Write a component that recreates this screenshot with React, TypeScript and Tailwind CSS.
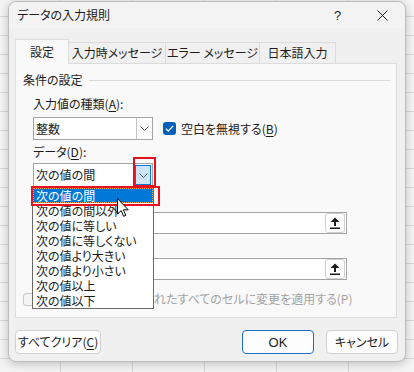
import React from 'react';

const font = "font-['Noto_Sans_CJK_JP','Noto_Sans',sans-serif] [font-feature-settings:'palt']";

const items = [
  '次の値の間',
  '次の値の間以外',
  '次の値に等しい',
  '次の値に等しくない',
  '次の値より大きい',
  '次の値より小さい',
  '次の値以上',
  '次の値以下',
];

function Chevron() {
  return (
    <svg width="9" height="5" viewBox="0 0 9 5" fill="none">
      <path d="M0.5 0.5 L4.5 4.5 L8.5 0.5" stroke="#5f5f5f" strokeWidth="1" />
    </svg>
  );
}

function UploadIcon() {
  return (
    <svg width="10" height="12" viewBox="0 0 10 12">
      <path d="M5 0.5 L9.5 5 L6 5 L6 9 L4 9 L4 5 L0.5 5 Z" fill="#1b1b1b" />
      <rect x="0" y="10.5" width="10" height="1.5" fill="#1b1b1b" />
    </svg>
  );
}

function RefField() {
  return (
    <div className="w-[314px] h-[22px] border border-[#a5a5a5] bg-white flex items-center justify-end pr-px">
      <div className="w-[20px] h-[20px] rounded-[3px] border border-[#cfcfcf] bg-white flex items-center justify-center">
        <UploadIcon />
      </div>
    </div>
  );
}

export default function App() {
  return (
    <div
      className={`${font} relative w-[414px] h-[372px] overflow-hidden pl-2 pt-px text-[12px] leading-none text-[#1b1b1b] bg-[#f4f4f4] [background-image:linear-gradient(to_bottom,#d6d6d6_1px,transparent_1px),linear-gradient(to_right,#d6d6d6_1px,transparent_1px)] [background-size:72px_19px] [background-position:60px_16px]`}
    >
      {/* dialog window */}
      <div className="w-[398px] h-[361px] rounded-[8px] border border-[#bcbcbc] bg-[#f0f0f0] shadow-[0_2px_10px_rgba(0,0,0,0.22)] flex flex-col">
        {/* title bar */}
        <div className="h-[26px] flex items-center rounded-t-[8px] bg-[#f3f3f3]">
          <span className="flex-1 pl-[8px]">データの入力規則</span>
          <div className="w-[46px] h-full flex items-center justify-center pl-[3px] text-[13px] font-['Liberation_Sans',sans-serif]">?</div>
          <div className="w-[46px] h-full flex items-center justify-center">
            <svg width="11" height="11" viewBox="0 0 11 11">
              <path d="M0.5 0.5 L10.5 10.5 M10.5 0.5 L0.5 10.5" stroke="#1b1b1b" strokeWidth="1" />
            </svg>
          </div>
        </div>

        {/* tabs */}
        <div className="mt-[11px] ml-[6px] flex items-end h-[24px]">
          <div className="relative z-10 -mb-px w-[54px] h-[25px] border border-b-0 border-[#dcdcdc] bg-[#f9f9f9] flex items-center justify-center">
            設定
          </div>
          <div className="w-[97px] h-[21px] border-t border-r border-[#dcdcdc] bg-[#f0f0f0] flex items-center justify-center">
            入力時メッセージ
          </div>
          <div className="w-[94px] h-[21px] border-t border-r border-[#dcdcdc] bg-[#f0f0f0] flex items-center justify-center">
            エラー メッセージ
          </div>
          <div className="w-[76px] h-[21px] border-t border-r border-[#dcdcdc] bg-[#f0f0f0] flex items-center justify-center">
            日本語入力
          </div>
        </div>

        {/* tab panel */}
        <div className="ml-[6px] w-[382px] h-[255px] border border-[#dcdcdc] bg-[#f9f9f9] flex flex-col">
          <div className="mt-[6px] h-[20px] flex items-center pl-[7px] pr-[6px]">
            <span>条件の設定</span>
            <div className="ml-[6px] flex-1 h-px bg-[#dadada]" />
          </div>

          <div className="pl-[17px] flex flex-col">
            <div className="mt-[5px] h-[18px] flex items-center">
              入力値の種類(<span className="underline underline-offset-2">A</span>):
            </div>
            <div className="mt-[4px] h-[23px] flex items-center">
              <div className="w-[120px] h-[23px] border border-[#a5a5a5] bg-white flex">
                <span className="flex-1 pl-[2px] flex items-center">整数</span>
                <div className="w-[16px] border-l border-[#c4c4c4] flex items-center justify-center">
                  <Chevron />
                </div>
              </div>
              <div className="ml-[10px] w-[13px] h-[13px] rounded-[3px] bg-[#005fb8] flex items-center justify-center">
                <svg width="9" height="7" viewBox="0 0 9 7" fill="none">
                  <path d="M0.8 3.6 L3.3 6 L8.2 0.9" stroke="white" strokeWidth="1.3" />
                </svg>
              </div>
              <span className="ml-[5px]">
                空白を無視する(<span className="underline underline-offset-2">B</span>)
              </span>
            </div>

            <div className="mt-[3px] h-[18px] flex items-center">
              データ(<span className="underline underline-offset-2">D</span>):
            </div>
            <div className="mt-[2px] w-[120px] h-[24px] border border-[#a5a5a5] bg-white flex p-px">
              <span className="flex-1 pl-px flex items-center">次の値の間</span>
              <div className="w-[16px] border border-[#0078d7] bg-[#cce4f7] flex items-center justify-center">
                <Chevron />
              </div>
            </div>

            {/* labels of the two range fields sit under the open list */}
            <div className="mt-[6px] h-[18px]" />
            <div className="mt-px">
              <RefField />
            </div>
            <div className="mt-[6px] h-[18px]" />
            <div>
              <RefField />
            </div>
          </div>

          <div className="mt-[11px] h-[16px] pl-[7px] flex items-center text-[#a3a3a3]">
            <div className="w-[13px] h-[13px] rounded-[3px] border border-[#c6c6c6] bg-[#f4f4f4]" />
            <span className="ml-[118px]">れたすべてのセルに変更を適用する(P)</span>
          </div>
        </div>

        {/* buttons */}
        <div className="mt-[12px] ml-[6px] mr-[7px] flex items-center">
          <button className="w-[86px] h-[24px] rounded-[4px] border border-[#d0d0d0] bg-[#fdfdfd] flex items-center justify-center">
            すべてクリア(<span className="underline underline-offset-2">C</span>)
          </button>
          <div className="flex-1" />
          <button className="w-[72px] h-[24px] rounded-[4px] border border-[#1c6fc4] bg-[#fdfdfd] flex items-center justify-center font-['Liberation_Sans',sans-serif] text-[13px]">
            OK
          </button>
          <button className="ml-[12px] w-[72px] h-[24px] rounded-[4px] border border-[#d0d0d0] bg-[#fdfdfd] flex items-center justify-center">
            キャンセル
          </button>
        </div>
      </div>

      {/* open dropdown list */}
      <div className="absolute left-[32px] top-[187px] w-[122px] border border-[#6a6a6a] bg-white">
        {items.map((item, i) =>
          i === 0 ? (
            <div
              key={item}
              className="h-[15px] pl-[2px] flex items-center bg-[#0078d7] text-white border border-dotted border-[#f0a542]"
            >
              {item}
            </div>
          ) : (
            <div key={item} className="h-[15px] pl-[3px] flex items-center">
              {item}
            </div>
          )
        )}
      </div>

      {/* red highlight boxes */}
      <div className="absolute left-[133px] top-[157px] w-[23px] h-[30px] border-2 border-[#e8101c]" />
      <div className="absolute left-[31px] top-[186px] w-[129px] h-[20px] border-2 border-[#e8101c]" />

      {/* mouse cursor */}
      <svg className="absolute left-[117px] top-[198px]" width="13" height="20" viewBox="0 0 13 20">
        <path
          d="M0.5 0.5 L0.5 16 L4.2 12.6 L6.6 18.3 L8.8 17.4 L6.4 11.8 L11.2 11.8 Z"
          fill="white"
          stroke="black"
          strokeWidth="1"
          strokeLinejoin="round"
        />
      </svg>
    </div>
  );
}
